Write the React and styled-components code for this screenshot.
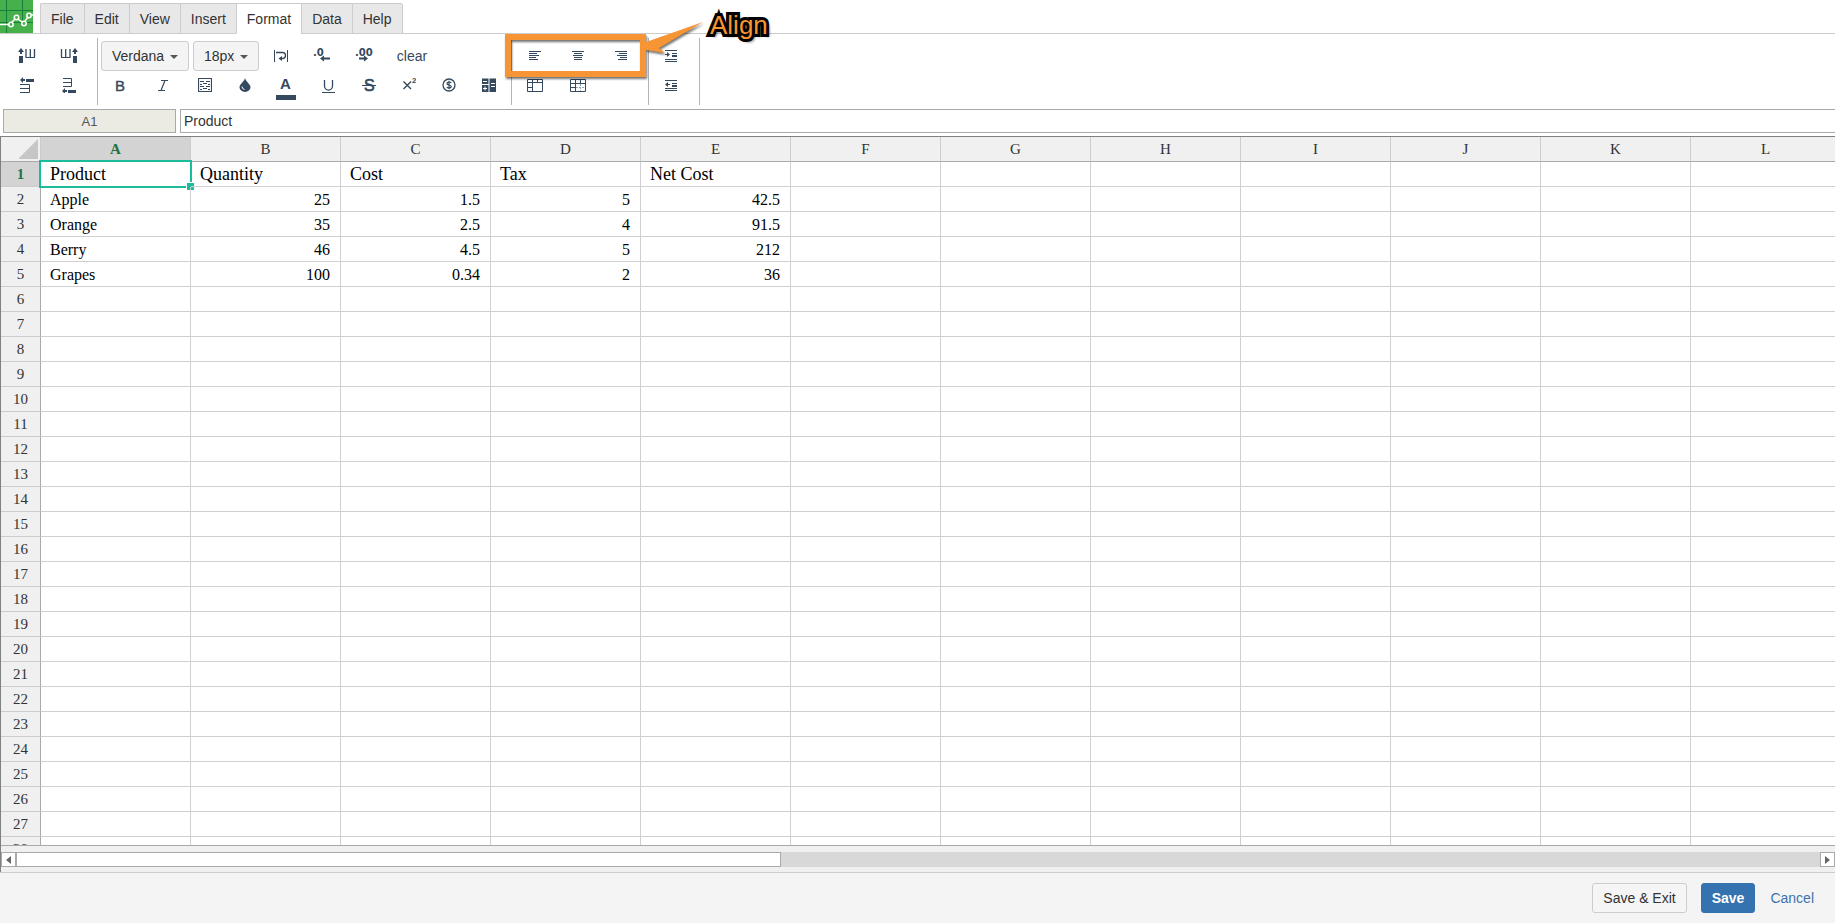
import React, { useState } from 'react'
import styled, { createGlobalStyle } from 'styled-components'

const GlobalStyle = createGlobalStyle`
* {
    box-sizing: border-box;
}
body {
    margin: 0;
    background: #fff;
    color: #333;
    font: 14px/20px "Liberation Sans", Arial, sans-serif;
}
button, input, select {
    margin: 0;
    font: inherit;
    color: inherit;
}
`;

const Page = styled.div`
display: flex;
flex-direction: column;
height: 100vh;
overflow: hidden;
position: relative;
`;

const TopBar = styled.header`
display: flex;
align-items: flex-end;
height: 34px;
border-bottom: 1px solid #ccc;
`;

const Logo = styled.a`
align-self: flex-start;
width: 33px;
height: 33px;
margin-right: 7px;
svg {
    display: block;
}
`;

const Tabs = styled.nav`
display: flex;
margin-bottom: -1px;
`;

const Tab = styled.button`
height: 31px;
padding: 0 10px;
border: 1px solid #ccc;
border-right-width: 0;
border-bottom-color: ${props => props.$active ? '#fff' : '#ccc'};
background: ${props => props.$active ? '#fff' : '#e8e8e8'};
&:first-child {
    border-top-left-radius: 2px;
}
&:last-child {
    border-right-width: 1px;
    border-top-right-radius: 2px;
}
`;

const Toolbar = styled.div`
display: flex;
padding: 4px 0;
`;

const Group = styled.div`
display: flex;
flex-direction: column;
height: 67px;
padding: 3px ${props => props.$right || 0}px 0 ${props => props.$left || 0}px;
border-right: 1px solid #b0b3b8;
`;

const Row = styled.div`
display: flex;
align-items: center;
height: ${props => props.$tall ? 30 : 28}px;
`;

const Tool = styled.button`
display: flex;
align-items: center;
justify-content: center;
width: ${props => props.$w || 42}px;
height: 28px;
padding: 0;
border: 0;
background: none;
color: #34495e;
svg {
    flex: none;
}
`;

const Clear = styled(Tool)`
margin-left: 7px;
`;

const SelectBox = styled.label`
position: relative;
margin: 0 2px;
&::after {
    content: "";
    position: absolute;
    right: 11px;
    top: 14px;
    border: 4px solid transparent;
    border-top-color: #555;
    border-bottom: 0;
    pointer-events: none;
}
select {
    appearance: none;
    display: block;
    width: ${props => props.$w}px;
    height: 30px;
    padding: 0 10px;
    border: 1px solid #ccc;
    border-radius: 3px;
    background: #f4f4f4;
}
`;

const FormulaBar = styled.div`
display: flex;
gap: 4px;
padding: 0 0 3px 3px;
`;

const NameBox = styled.input`
width: 173px;
height: 24px;
border: 1px solid #a9a9a9;
background: #ebebe3;
color: #555;
font-size: 13px;
text-align: center;
`;

const Formula = styled.input`
flex: 1;
min-width: 0;
height: 24px;
padding: 0 3px;
border: 1px solid #a9a9a9;
border-right: 0;
`;

const Frame = styled.main`
flex: 1;
min-height: 0;
display: flex;
flex-direction: column;
border-top: 1px solid #808080;
border-left: 1px solid #808080;
background: #f0f0f0;
`;

const Viewport = styled.div`
flex: 1;
min-height: 0;
overflow: hidden;
border-bottom: 1px solid #a9a9a9;
background: #fff;
`;

const Sheet = styled.table`
table-layout: fixed;
width: ${props => 40 + props.$cols * 150}px;
border-spacing: 0;
font-family: "Liberation Serif", "Times New Roman", serif;
`;

const HeadCell = styled.th`
width: ${props => props.$corner ? 40 : 150}px;
height: 25px;
padding: 0;
border-right: 1px solid ${props => props.$side ? '#a9a9a9' : '#ccc'};
border-bottom: 1px solid ${props => props.$side ? '#ccc' : '#a9a9a9'};
background: ${props => props.$on ? '#d3d3d3' : '#f0f0f0'};
color: ${props => props.$on ? '#217346' : '#333'};
font-size: 15px;
font-weight: ${props => props.$on ? 'bold' : 'normal'};
line-height: 24px;
svg {
    display: block;
    margin-left: auto;
}
`;

const Cell = styled.td`
position: relative;
height: 25px;
padding: ${props => props.$big ? 0 : 2}px 10px 0 9px;
border-right: 1px solid #d0d0d0;
border-bottom: 1px solid #d0d0d0;
color: #000;
font-size: ${props => props.$big ? 18 : 16}px;
line-height: ${props => props.$big ? 24 : 22}px;
text-align: ${props => props.$number ? 'right' : 'left'};
`;

const Selection = styled.div`
position: absolute;
inset: -2px;
border: 2px solid #1abc9c;
&::after {
    content: "";
    position: absolute;
    right: -5px;
    bottom: -5px;
    width: 7px;
    height: 7px;
    border: 1px solid #fff;
    background: #1abc9c;
}
`;

const ScrollBar = styled.div`
display: flex;
height: 15px;
margin: 6px 0 5px;
background: #d8d8d8;
`;

const ScrollButton = styled.button`
display: flex;
align-items: center;
justify-content: center;
width: 15px;
padding: 0;
border: 1px solid #a9a9a9;
background: #fff;
color: #666;
`;

const Track = styled.div`
flex: 1;
`;

const Thumb = styled.div`
width: 42.4%;
height: 100%;
border: 1px solid #a9a9a9;
background: #fff;
`;

const Footer = styled.footer`
display: flex;
align-items: center;
justify-content: flex-end;
height: 51px;
padding-right: 21px;
border-top: 1px solid #ccc;
background: #f4f4f4;
`;

const Button = styled.button`
height: 30px;
margin-right: ${props => props.$primary ? 15 : 14}px;
padding: 0 10px;
border: 1px solid ${props => props.$primary ? '#3572b0' : '#ccc'};
border-radius: 3px;
background: ${props => props.$primary ? '#3572b0' : '#f5f5f5'};
color: ${props => props.$primary ? '#fff' : '#333'};
font-weight: ${props => props.$primary ? 'bold' : 'normal'};
`;

const Cancel = styled.a`
color: #3b73af;
text-decoration: none;
`;

const Callout = styled.div`
position: absolute;
left: 505px;
top: 10px;
pointer-events: none;
svg {
    display: block;
    overflow: visible;
    filter: drop-shadow(1px 2px 1px rgba(0, 0, 0, 0.55));
}
`;

const CalloutText = styled.span`
position: absolute;
left: 205px;
top: 0;
color: #f79433;
font-size: 26px;
line-height: 30px;
-webkit-text-stroke: 6px #000;
paint-order: stroke fill;
text-shadow: 3px 3px 3px rgba(0, 0, 0, 0.6);
`;

function Icon({ w = 18, h = 16, children }) {
    return (
        <svg width={w} height={h} viewBox={`0 0 ${w} ${h}`} fill="currentColor" aria-hidden="true">
            {children}
        </svg>
    )
}

const lines = (d, width = 1) => <path d={d} fill="none" stroke="currentColor" strokeWidth={width} />

const icons = {
    colLeft: (
        <Icon>
            <path d="M3 0L6 4H4V6H2V4H0zM1 8H5V15H1z" />
            {lines('M8 1V9M16.500 1V9M12.300 1V9', 1.3)}
            {lines('M7.500 9.500H17')}
        </Icon>
    ),
    colRight: (
        <Icon>
            <path d="M15 0L18 4H16V6H14V4H12zM13 8H17V15H13z" />
            {lines('M1.500 1V9M10 1V9M5.700 1V9', 1.3)}
            {lines('M1 9.500H10.500')}
        </Icon>
    ),
    rowAbove: (
        <Icon w={16}>
            <path d="M1 3L4 0V2H6V4H4V6zM7 2H15V5H7z" />
            {lines('M1 7.500H10.500V15.500H1M1 11.500H10')}
        </Icon>
    ),
    rowBelow: (
        <Icon w={16}>
            <path d="M1 14L4 11V13H6V15H4V17zM7 13H15V16H7z" />
            {lines('M2 1.500H10.500V9.500H2M2 5.500H10')}
        </Icon>
    ),
    wrap: (
        <Icon w={16} h={14}>
            {lines('M1.500 1V13M14.500 1V13')}
            {lines('M3 3.500H9.500Q12.500 3.500 12.500 6.500Q12.500 9.500 9.500 9.500H7', 1.3)}
            <path d="M9 7V12L5.500 9.500z" />
        </Icon>
    ),
    lessDec: (
        <Icon w={18}>
            <text x="0" y="8" fontSize="10" fontWeight="bold" fontFamily="DejaVu Sans, sans-serif">.0</text>
            <path d="M7 10.500L11 7.500V9.500H17V11.500H11V13.500z" />
        </Icon>
    ),
    moreDec: (
        <Icon w={18}>
            <text x="0" y="8" fontSize="10" fontWeight="bold" fontFamily="DejaVu Sans, sans-serif">.00</text>
            <path d="M13 10.500L9 7.500V9.500H4V11.500H9V13.500z" />
        </Icon>
    ),
    borders: (
        <Icon w={14} h={14}>
            {lines('M0.500 0.500H13.500V13.500H0.500z', 1.2)}
            {lines('M2 3.500H6M8 3.500H12M2 6.500H4M5 5.500H9M10 6.500H12M2 8.500H6M8 8.500H12M2 11.500H4M5 10.500H9M10 11.500H12')}
        </Icon>
    ),
    drop: (
        <Icon w={12} h={14}>
            <path d="M6 0C7 4 11.500 6 11.500 9A5.500 5 0 0 1 0.500 9C0.500 6 5 4 6 0z" />
            <path d="M3 8.500Q3 11 5.500 11.500" fill="none" stroke="#fff" />
        </Icon>
    ),
    money: (
        <Icon w={14} h={14}>
            <circle cx="7" cy="7" r="6" fill="none" stroke="currentColor" strokeWidth="1.300" />
            <path d="M9.200 5Q8.700 4 7 4Q5 4 5 5.500Q5 6.800 7 7Q9.200 7.200 9.200 8.600Q9.200 10 7 10Q5.300 10 4.800 9M7 2.800V11.200" fill="none" stroke="currentColor" strokeWidth="1.200" />
        </Icon>
    ),
    calc: (
        <Icon w={14} h={14}>
            <path d="M0 0.500H6.500V6H0zM7.500 0.500H14V14H7.500zM0 7H6.500V14H0z" />
            <path d="M1 3.500H5M1 10.500H5M3 8.500V12.500M9 5.500H13M9 8.500H13" stroke="#fff" />
        </Icon>
    ),
    alignLeft: <Icon w={12} h={10}>{lines('M0 0.500H12M0 2.500H8M0 4.500H10M0 6.500H7M0 8.500H9')}</Icon>,
    alignCenter: <Icon w={12} h={10}>{lines('M0 0.500H12M2 2.500H10M1 4.500H11M2 6.500H10M2 8.500H10')}</Icon>,
    alignRight: <Icon w={12} h={10}>{lines('M0 0.500H12M4 2.500H12M2 4.500H12M5 6.500H12M3 8.500H12')}</Icon>,
    freeze: <Icon w={16} h={14}>{lines('M0.500 1.500H15.500V13.500H0.500zM0 4.500H16M5.500 1V13M10.500 1V4M0 9.500H5')}</Icon>,
    merge: (
        <Icon w={16} h={14}>
            {lines('M0.500 1.500H15.500V13.500H0.500zM0 5.500H16M5.500 1V13M10.500 1V5M0 9.500H6')}
            <path d="M6 9.500H15M10.500 6V13" fill="none" stroke="#8ba6bd" strokeDasharray="2 1" />
        </Icon>
    ),
    indent: (
        <Icon w={12} h={12}>
            {lines('M0 0.500H12M7 3.500H12M0 9.500H12M0 11.500H12')}
            <path d="M0 4H2V2L5 4.500L2 7V5H0zM7 5H12V7H7z" />
        </Icon>
    ),
    outdent: (
        <Icon w={12} h={12}>
            {lines('M0 1.500H12M7 4.500H12M0 9.500H12M0 11.500H12')}
            <path d="M5 5H3V3L0 5.500L3 8V6H5zM7 6H12V8H7z" />
        </Icon>
    ),
    bold: <Icon w={14}><text x="2" y="14" fontSize="15" stroke="currentColor" strokeWidth="0.400">B</text></Icon>,
    italic: <Icon w={14}>{lines('M5 3.500H12M2 13.500H9M8.800 4L5.200 13', 1.2)}</Icon>,
    color: (
        <Icon w={20} h={30}>
            <text x="4" y="19" fontSize="15" fontWeight="bold">A</text>
            <path d="M0 25H20V30H0z" />
        </Icon>
    ),
    underline: <Icon w={14}>{lines('M3.500 3V9A3.900 4 0 0 0 11.500 9V3', 1.3)}{lines('M1 15.500H14')}</Icon>,
    strike: <Icon w={14}><text x="2" y="14" fontSize="16" stroke="currentColor" strokeWidth="0.600">S</text>{lines('M0 8.500H14')}</Icon>,
    sup: (
        <Icon w={13}>
            {lines('M0.500 4.500L8 12M8 4.500L0.500 12', 1.4)}
            <text x="9" y="6" fontSize="8" fontWeight="bold">2</text>
        </Icon>
    ),
}

const tabs = ['File', 'Edit', 'View', 'Insert', 'Format', 'Data', 'Help']
const cols = 'ABCDEFGHIJKL'.split('')
const rows = Array.from({ length: 28 }, (_, i) => i + 1)
const data = [
    ['Product', 'Quantity', 'Cost', 'Tax', 'Net Cost'],
    ['Apple', 25, 1.5, 5, 42.5],
    ['Orange', 35, 2.5, 4, 91.5],
    ['Berry', 46, 4.5, 5, 212],
    ['Grapes', 100, 0.34, 2, 36],
]

const textTools = [
    ['bold', 'Bold', 42],
    ['italic', 'Italic', 44],
    ['borders', 'Borders', 40],
    ['drop', 'Fill color', 40],
    ['color', 'Text color', 42],
    ['underline', 'Underline', 42],
    ['strike', 'Strikethrough', 40],
    ['sup', 'Superscript', 40],
    ['money', 'Currency', 40],
    ['calc', 'Number format', 40],
]

function ToolButton({ icon, label, w }) {
    return <Tool $w={w} aria-label={label}>{icons[icon]}</Tool>
}

function FormatToolbar() {
    return (
        <Toolbar>
            <Group $left={6} $right={7}>
                <Row $tall>
                    <ToolButton icon="colLeft" label="Insert column left" />
                    <ToolButton icon="colRight" label="Insert column right" />
                </Row>
                <Row>
                    <ToolButton icon="rowAbove" label="Insert row above" />
                    <ToolButton icon="rowBelow" label="Insert row below" />
                </Row>
            </Group>
            <Group $left={1} $right={2}>
                <Row $tall>
                    <SelectBox $w={88}>
                        <select aria-label="Font" defaultValue="Verdana">
                            <option>Verdana</option>
                            <option>Arial</option>
                        </select>
                    </SelectBox>
                    <SelectBox $w={66}>
                        <select aria-label="Font size" defaultValue="18px">
                            <option>16px</option>
                            <option>18px</option>
                        </select>
                    </SelectBox>
                    <ToolButton icon="wrap" label="Wrap text" w={40} />
                    <ToolButton icon="lessDec" label="Decrease decimals" />
                    <ToolButton icon="moreDec" label="Increase decimals" />
                    <Clear $w={40}>clear</Clear>
                </Row>
                <Row>
                    {textTools.map(([icon, label, w]) => (
                        <ToolButton key={icon} icon={icon} label={label} w={w} />
                    ))}
                </Row>
            </Group>
            <Group $left={1} $right={6}>
                <Row $tall>
                    <ToolButton icon="alignLeft" label="Align left" w={43} />
                    <ToolButton icon="alignCenter" label="Align center" w={43} />
                    <ToolButton icon="alignRight" label="Align right" w={43} />
                </Row>
                <Row>
                    <ToolButton icon="freeze" label="Merge cells" w={43} />
                    <ToolButton icon="merge" label="Split cells" w={43} />
                </Row>
            </Group>
            <Group $right={6}>
                <Row $tall><ToolButton icon="indent" label="Indent" w={44} /></Row>
                <Row><ToolButton icon="outdent" label="Outdent" w={44} /></Row>
            </Group>
        </Toolbar>
    )
}

function App() {
    const [active, setActive] = useState('Format')
    const [formula, setFormula] = useState('Product')

    return (
        <Page>
            <GlobalStyle />
            <TopBar>
                <Logo href="#" aria-label="Home">
                    <svg width="33" height="33" viewBox="0 0 33 33">
                        <path d="M0 0H33V33H0z" fill="#46b04a" />
                        <path d="M6.500 0V33M22.500 0V20M0 10.500H33M0 22.500H33" stroke="#14803c" fill="none" />
                        <path d="M0 24.500H9M12 22L15 19M18 19L22 22M25 21L28 17M31 15H33" stroke="#fff" strokeWidth="1.500" fill="none" />
                        <g fill="#46b04a" stroke="#fff" strokeWidth="1.500">
                            <circle cx="11" cy="24.500" r="2.200" />
                            <circle cx="16.500" cy="17.500" r="2.200" />
                            <circle cx="24" cy="23.500" r="2.200" />
                            <circle cx="29" cy="15.500" r="2.200" />
                        </g>
                    </svg>
                </Logo>
                <Tabs>
                    {tabs.map(tab => (
                        <Tab key={tab} $active={tab === active} onClick={() => setActive(tab)}>{tab}</Tab>
                    ))}
                </Tabs>
            </TopBar>

            <FormatToolbar />

            <FormulaBar>
                <NameBox aria-label="Cell" defaultValue="A1" />
                <Formula aria-label="Formula" value={formula} onChange={e => setFormula(e.target.value)} />
            </FormulaBar>

            <Frame>
                <Viewport>
                    <Sheet $cols={cols.length}>
                        <thead>
                            <tr>
                                <HeadCell $corner>
                                    <svg width="21" height="21" viewBox="0 0 21 21">
                                        <path d="M19 0V20H-1z" fill="#c6c6c6" />
                                    </svg>
                                </HeadCell>
                                {cols.map((c, i) => <HeadCell key={c} $on={i === 0}>{c}</HeadCell>)}
                            </tr>
                        </thead>
                        <tbody>
                            {rows.map((n, r) => (
                                <tr key={n}>
                                    <HeadCell $side $on={r === 0}>{n}</HeadCell>
                                    {cols.map((c, i) => {
                                        const value = data[r]?.[i]
                                        return (
                                            <Cell key={c} $big={r === 0} $number={typeof value === 'number'}>
                                                {value}
                                                {r === 0 && i === 0 && <Selection />}
                                            </Cell>
                                        )
                                    })}
                                </tr>
                            ))}
                        </tbody>
                    </Sheet>
                </Viewport>
                <ScrollBar>
                    <ScrollButton aria-label="Scroll left">
                        <svg width="5" height="8" viewBox="0 0 5 8"><path d="M5 0V8L0 4z" fill="currentColor" /></svg>
                    </ScrollButton>
                    <Track><Thumb /></Track>
                    <ScrollButton aria-label="Scroll right">
                        <svg width="5" height="8" viewBox="0 0 5 8"><path d="M0 0V8L5 4z" fill="currentColor" /></svg>
                    </ScrollButton>
                </ScrollBar>
            </Frame>

            <Footer>
                <Button>Save &amp; Exit</Button>
                <Button $primary>Save</Button>
                <Cancel href="#">Cancel</Cancel>
            </Footer>

            <Callout>
                <svg width="200" height="70" viewBox="0 0 200 70">
                    <path d="M3 27H138V64H3z" fill="none" stroke="#f79433" strokeWidth="6" />
                    <path d="M198 12L141 32V36L135 39L160 43L154 38z" fill="#f79433" />
                </svg>
                <CalloutText>Align</CalloutText>
            </Callout>
        </Page>
    )
}

export default App
